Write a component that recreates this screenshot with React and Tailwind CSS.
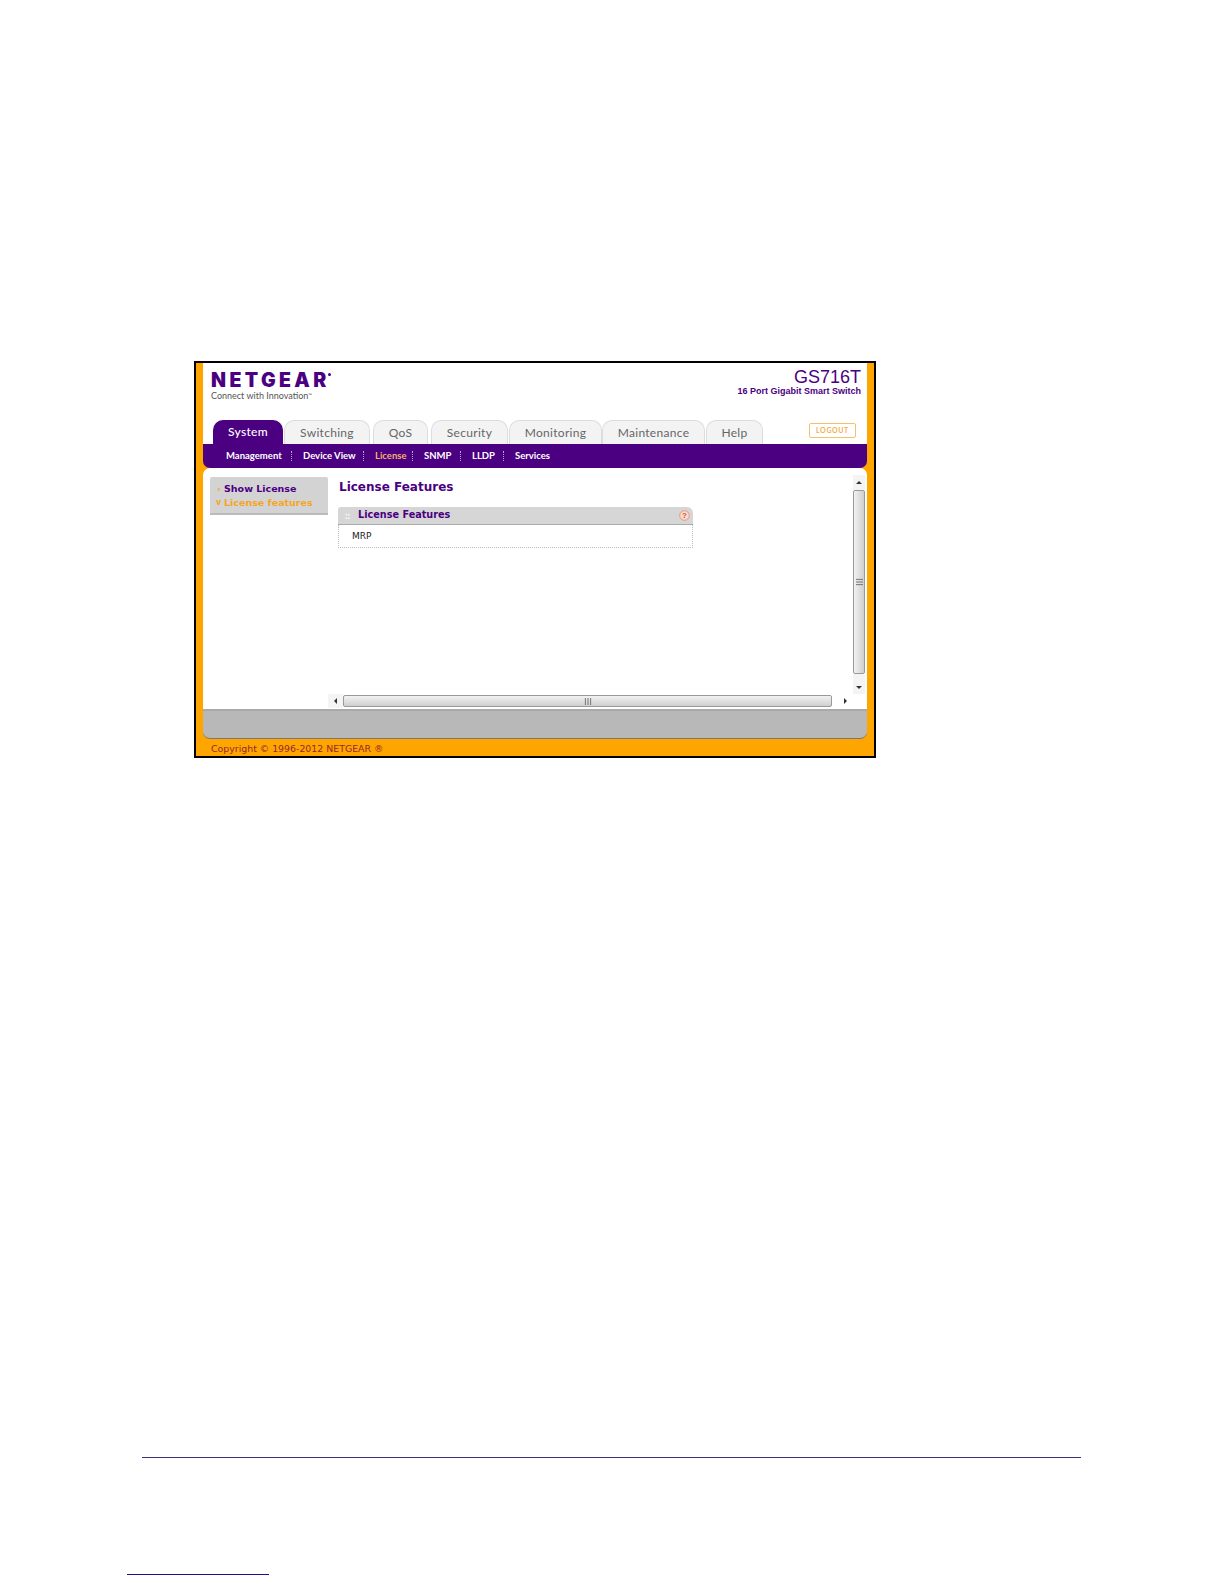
const tabs = [
  { label: "System", cls: "w-[70px]", active: true },
  { label: "Switching", cls: "w-[86px] ml-[1px]" },
  { label: "QoS", cls: "w-[55px] ml-[3px]" },
  { label: "Security", cls: "w-[77px] ml-[3px]" },
  { label: "Monitoring", cls: "w-[93px] ml-[1px]" },
  { label: "Maintenance", cls: "w-[103px]" },
  { label: "Help", cls: "w-[57px] ml-[1px]" },
]

const subTabs = [
  { label: "Management", w: "w-[77px]" },
  { label: "Device View", w: "w-[72px]" },
  { label: "License", w: "w-[49px]", active: true },
  { label: "SNMP", w: "w-[48px]" },
  { label: "LLDP", w: "w-[43px]" },
  { label: "Services", w: "w-[50px]", last: true },
]

function Logo() {
  return (
    <div className="pl-[8px] pt-[8px]">
      <div className="flex items-start text-[#4b0082] font-black text-[19.5px] leading-[18px] tracking-[3.4px] font-['Inter',sans-serif]">
        NETGEAR
        <span className="w-[3px] h-[3px] mt-[2px] -ml-[2px] rounded-full bg-[#4b0082]" />
      </div>
      <div className="mt-[1px] text-[9px] leading-[12px] text-[#555] font-['Lato',sans-serif]">
        Connect with Innovation<sup className="text-[5px]">™</sup>
      </div>
    </div>
  )
}

function Tabs() {
  return (
    <div className="flex items-end h-[24px] pl-[10px] font-['Lato',sans-serif] text-[12px] tracking-[0.3px]">
      {tabs.map((t) => (
        <div
          key={t.label}
          className={`${t.cls} h-[24px] flex items-center justify-center rounded-t-[10px] ${
            t.active
              ? "bg-[#4b0082] text-white font-medium"
              : "bg-[#f3f3f3] border border-b-0 border-[#dcdcdc] text-[#666]"
          }`}
        >
          {t.label}
        </div>
      ))}
      <div className="ml-auto mr-[11px] mb-[6px] w-[47px] h-[15px] flex items-center justify-center rounded-[2px] border border-[#f5c069] bg-white text-[#f0b050] text-[7px] font-bold tracking-[0.6px]">
        LOGOUT
      </div>
    </div>
  )
}

function SubNav() {
  return (
    <div className="flex items-center h-[24px] pl-[23px] bg-[#4b0082] rounded-b-[7px] font-['Lato',sans-serif] text-[9.5px] font-bold">
      {subTabs.map((s) => (
        <div key={s.label} className={`${s.w} flex items-center justify-between`}>
          <span className={s.active ? "text-[#f5b26b]" : "text-white"}>{s.label}</span>
          {!s.last && <span className="h-[10px] mr-[11px] border-r border-dotted border-[#b9a3d0]" />}
        </div>
      ))}
    </div>
  )
}

function SideMenu() {
  return (
    <div className="w-[118px] h-[38px] mt-[9px] ml-[7px] shrink-0 pt-[5px] bg-[#d3d3d3] border-b-2 border-[#bbb] rounded-t-[2px] font-['DejaVu_Sans',sans-serif] text-[9.5px] leading-[14px] font-bold">
      <div className="flex text-[#4b0082]">
        <span className="w-[14px] pl-[7px] text-[#f5a623]">›</span>Show License
      </div>
      <div className="flex text-[#f5a623]">
        <span className="w-[14px] pl-[6px] text-[8px]">v</span>License features
      </div>
    </div>
  )
}

function HelpIcon() {
  return (
    <svg width="11" height="11" viewBox="0 0 11 11" className="mr-[3px]">
      <circle cx="5.5" cy="5.5" r="4.8" fill="#f7dcd2" stroke="#e9967a" />
      <text x="5.5" y="8.2" textAnchor="middle" fontSize="8" fontWeight="700" fill="#d9532c" fontFamily="Liberation Sans">?</text>
    </svg>
  )
}

function Arrow({ dir }) {
  const points = {
    up: "0,4 3,1 6,4",
    down: "0,1 6,1 3,4",
    left: "4,0 4,6 1,3",
    right: "1,0 1,6 4,3",
  }
  return (
    <svg width="6" height="6" viewBox="0 0 6 6">
      <polygon points={points[dir]} fill="#333" />
    </svg>
  )
}

function Grip({ vertical }) {
  return (
    <svg width={vertical ? 7 : 8} height={vertical ? 8 : 7} viewBox="0 0 8 8">
      {vertical
        ? <path d="M0 1h8M0 4h8M0 7h8" stroke="#666" />
        : <path d="M1 0v8M4 0v8M7 0v8" stroke="#666" />}
    </svg>
  )
}

function Panel() {
  return (
    <div className="w-[355px]">
      <div className="flex items-center h-[18px] bg-[#d6d6d6] border-b border-[#aaa] rounded-tr-[6px] rounded-tl-[3px]">
        <span className="w-[20px] pl-[7px] text-white text-[9px] leading-none font-bold">::</span>
        <span className="flex-1 text-[#4b0082] text-[9.7px] font-bold font-['DejaVu_Sans',sans-serif]">License Features</span>
        <HelpIcon />
      </div>
      <div className="h-[23px] pl-[13px] pt-[2px] flex items-center border-x border-b border-dotted border-[#bbb] text-[9px] text-[#222] font-['DejaVu_Sans',sans-serif]">
        MRP
      </div>
    </div>
  )
}

function VScroll() {
  return (
    <div className="w-[12px] flex flex-col items-center">
      <div className="h-[15px] w-full flex items-center justify-center bg-[#f4f4f4]"><Arrow dir="up" /></div>
      <div className="flex-1 w-full flex items-center justify-center rounded-[2px] border border-[#999] bg-gradient-to-r from-[#f2f2f2] to-[#cfcfcf]"><Grip vertical /></div>
      <div className="h-[20px] pt-[7px] w-full flex items-center justify-center bg-[#f4f4f4]"><Arrow dir="down" /></div>
    </div>
  )
}

function HScroll() {
  return (
    <div className="flex items-center h-[14px] ml-[125px] mb-[1px]">
      <div className="w-[15px] h-full flex items-center justify-center bg-[#f4f4f4]"><Arrow dir="left" /></div>
      <div className="flex-1 h-[12px] flex items-center justify-center rounded-[2px] border border-[#999] bg-gradient-to-b from-[#f2f2f2] to-[#cfcfcf]"><Grip /></div>
      <div className="w-[35px] pl-[11px] flex items-center"><Arrow dir="right" /></div>
    </div>
  )
}

export default function App() {
  return (
    <div className="w-[1224px] h-[1584px] bg-white flex flex-col">
      <div className="h-[361px]" />
      <div className="ml-[194px] w-[682px] h-[397px] border-2 border-black bg-[#ffa500] flex flex-col">
        <div className="ml-[7px] mr-[7px] h-[81px] bg-white flex flex-col justify-between">
          <div className="flex justify-between">
            <Logo />
            <div className="pr-[6px] pt-[4px] text-right text-[#4b0082] font-['Liberation_Sans',sans-serif]">
              <div className="text-[18px] leading-[20px]">GS716T</div>
              <div className="text-[9px] leading-[9px] font-bold">16 Port Gigabit Smart Switch</div>
            </div>
          </div>
          <Tabs />
        </div>
        <div className="mx-[7px]">
          <SubNav />
        </div>
        <div className="mx-[7px] h-[241px] bg-white rounded-t-[7px] flex flex-col">
          <div className="flex flex-1 min-h-0">
            <SideMenu />
            <div className="flex-1 pl-[10px] pt-[10px] min-w-0">
              <div className="pl-[1px] text-[#4b0082] text-[12px] leading-[18px] font-bold font-['DejaVu_Sans',sans-serif]">License Features</div>
              <div className="mt-[11px]"><Panel /></div>
            </div>
            <div className="pt-[7px] mr-[2px] flex"><VScroll /></div>
          </div>
          <HScroll />
        </div>
        <div className="mx-[7px] h-[30px] bg-[#b8b8b8] border-t-2 border-b border-t-[#a9a9a9] border-b-[#777] rounded-b-[7px]" />
        <div className="pl-[15px] pt-[4px] h-[17px] flex items-center text-[#94282c] text-[9.4px] font-['DejaVu_Sans',sans-serif]">
          Copyright © 1996-2012 NETGEAR ®
        </div>
      </div>
      <div className="ml-[142px] w-[939px] mt-[699px] border-t border-[#3b2f7a]" />
      <div className="ml-[127px] w-[142px] mt-[116px] border-t border-[#1a0f8f]" />
    </div>
  )
}
